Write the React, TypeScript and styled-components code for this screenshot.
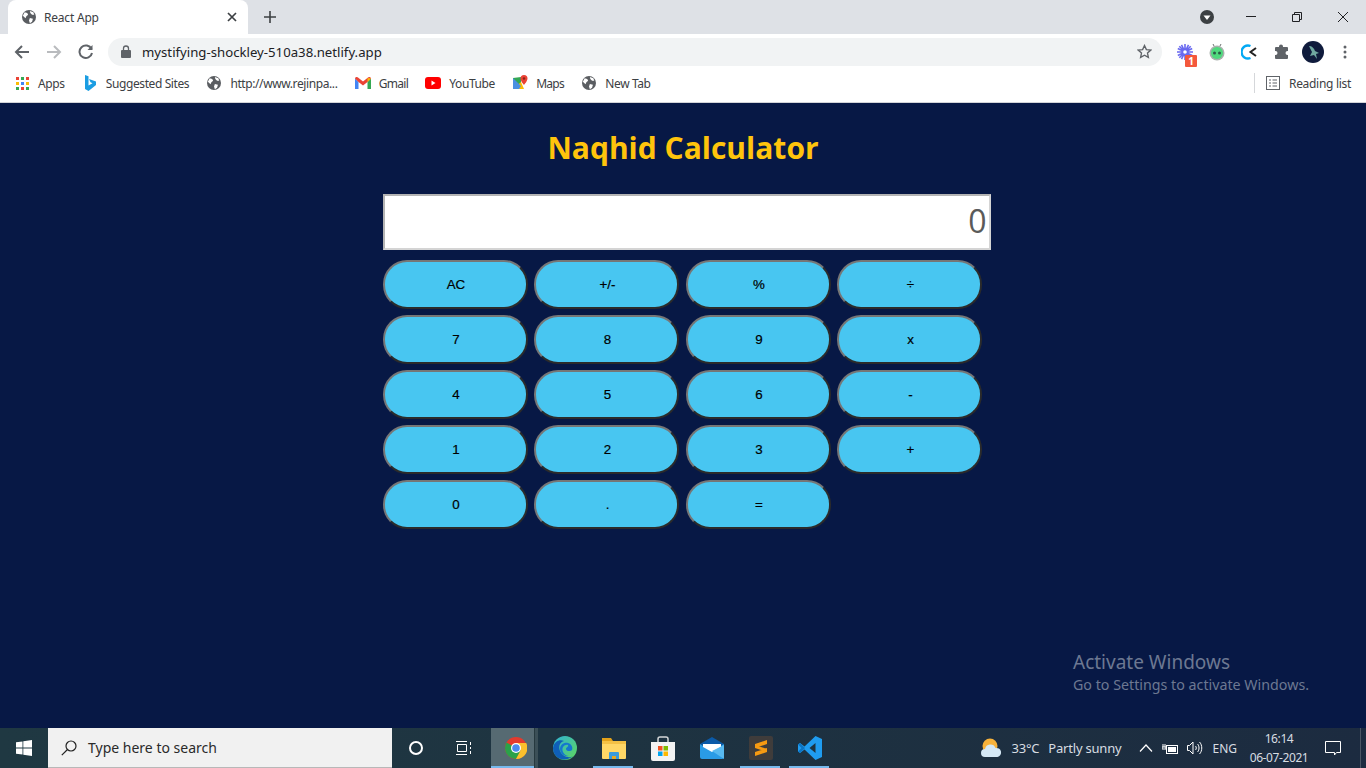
import React from 'react';
import styled, { createGlobalStyle } from 'styled-components';

const Global = createGlobalStyle`
  html, body { margin: 0; padding: 0; height: 100%; overflow: hidden; }
  body { font-family: "Open Sans", "Liberation Sans", sans-serif; }
`;

const Screen = styled.div`
  width: 1366px;
  height: 768px;
  display: flex;
  flex-direction: column;
  position: relative;
  overflow: hidden;
`;

/* browser chrome */
const TabStrip = styled.div`
  height: 34px;
  flex: none;
  background: #dee1e6;
  display: flex;
  align-items: flex-end;
  padding-left: 8px;
`;
const Tab = styled.div`
  width: 240px;
  height: 34px;
  box-sizing: border-box;
  padding: 0 11px 0 14px;
  background: #fff;
  border-radius: 8px 8px 0 0;
  display: flex;
  align-items: center;
  gap: 8px;
`;
const TabTitle = styled.span`
  flex: 1;
  font-size: 12px;
  letter-spacing: -0.2px;
  color: #3c4043;
  font-family: "Noto Sans", sans-serif;
`;
const NewTab = styled.div`
  width: 44px;
  height: 34px;
  display: flex;
  align-items: center;
  justify-content: center;
`;
const WindowControls = styled.div`
  margin-left: auto;
  height: 34px;
  display: flex;
  align-items: center;
`;
const WinBtn = styled.div<{ $w?: number }>`
  width: ${p => p.$w ?? 46}px;
  height: 34px;
  display: flex;
  align-items: center;
  justify-content: center;
`;
const Toolbar = styled.div`
  height: 35px;
  flex: none;
  background: #fff;
  display: flex;
  align-items: center;
  padding-left: 6px;
`;
const NavBtn = styled.div`
  width: 32px;
  height: 32px;
  display: flex;
  align-items: center;
  justify-content: center;
`;
const UrlBar = styled.div`
  width: 1054px;
  height: 28px;
  margin-left: 6px;
  box-sizing: border-box;
  padding: 0 10px 0 13px;
  border-radius: 14px;
  background: #f1f3f4;
  display: flex;
  align-items: center;
  gap: 11px;
`;
const UrlText = styled.span`
  flex: 1;
  font-size: 13.2px;
  color: #202124;
  font-family: "Noto Sans", sans-serif;
`;
const Extensions = styled.div`
  margin-left: 7px;
  display: flex;
  align-items: center;
`;
const Ext = styled.div`
  width: 32px;
  height: 32px;
  position: relative;
  display: flex;
  align-items: center;
  justify-content: center;
`;
const ExtBadge = styled.span`
  position: absolute;
  right: 4px;
  bottom: 1px;
  width: 12px;
  height: 12px;
  background: #f4583c;
  color: #fff;
  font-size: 10px;
  font-weight: 700;
  line-height: 12px;
  text-align: center;
  border-radius: 1px;
`;
const Bookmarks = styled.div`
  height: 34px;
  flex: none;
  box-sizing: border-box;
  background: #fff;
  border-bottom: 1px solid #d2d4d8;
  display: flex;
  align-items: center;
  padding: 0 0 5px 14px;
  gap: 17.2px;
`;
const Bookmark = styled.div<{ $tight?: boolean }>`
  display: flex;
  align-items: center;
  gap: 8px;
  font-size: 12px;
  color: #3c4043;
  font-family: "Noto Sans", sans-serif;
  letter-spacing: ${p => (p.$tight ? '-0.7px' : '-0.4px')};
`;
const IconSlot = styled.span`
  width: 16px;
  height: 16px;
  display: flex;
  align-items: center;
  justify-content: center;
`;
const ReadingList = styled.div`
  margin-left: auto;
  height: 20px;
  padding: 0 15px 0 11px;
  border-left: 1px solid #d5d7da;
  display: flex;
  align-items: center;
  gap: 9px;
  font-size: 12px;
  color: #3c4043;
  font-family: "Noto Sans", sans-serif;
  letter-spacing: -0.3px;
`;

/* calculator page */
const Page = styled.main`
  flex: 1;
  background: #071845;
  display: flex;
  flex-direction: column;
  align-items: center;
`;
const Title = styled.h1`
  margin: 24px 0 0;
  font-family: "Open Sans", sans-serif;
  font-size: 30px;
  line-height: 42px;
  font-weight: 700;
  color: #ffc40c;
`;
const Calculator = styled.div`
  width: 608px;
  margin: 25px 0 0 7px;
  display: flex;
  flex-direction: column;
  gap: 10px;
`;
const Display = styled.input`
  width: 608px;
  height: 56px;
  box-sizing: border-box;
  border-width: 2px;
  border-style: solid;
  border-color: #b4b4b4 #d4d4d4 #d4d4d4 #b4b4b4;
  background: #fff;
  padding: 0 2px 3px 0;
  text-align: right;
  font-family: "Open Sans", sans-serif;
  font-size: 32px;
  color: #5a5a5a;
  outline: none;
`;
const Keys = styled.div`
  display: grid;
  grid-template-columns: repeat(4, 145px);
  grid-auto-rows: 49px;
  column-gap: 6.5px;
  row-gap: 6px;
`;
const Key = styled.button`
  box-sizing: border-box;
  border-width: 2px;
  border-style: solid;
  border-color: #767676 #2b2b2b #2b2b2b #767676;
  border-radius: 24px;
  background: #48c6f1;
  color: #000;
  padding: 0 0 0 2px;
  font-family: "Liberation Sans", sans-serif;
  font-size: 13.33px;
  font-weight: 400;
  -webkit-text-stroke: 0.2px #000;
`;
const Watermark = styled.div`
  position: absolute;
  left: 1073px;
  top: 649px;
  color: #6d7892;
  font-family: "Noto Sans", sans-serif;
  font-size: 14.25px;
  line-height: 20px;
`;
const WatermarkTitle = styled.div`
  font-size: 19px;
  line-height: 26px;
`;

/* windows taskbar */
const Taskbar = styled.footer`
  height: 40px;
  flex: none;
  background: linear-gradient(90deg, #1f3842 0%, #1e3441 40%, #1c2b40 100%);
  display: flex;
  align-items: stretch;
  color: #fff;
`;
const Start = styled.div`
  width: 48px;
  display: flex;
  align-items: center;
  justify-content: center;
`;
const Search = styled.div`
  width: 344px;
  box-sizing: border-box;
  background: #f1f1f1;
  border-bottom: 1px solid #b8b8b8;
  padding-left: 13px;
  display: flex;
  align-items: center;
  gap: 11px;
  color: #2a2a2a;
  font-size: 14px;
  font-family: "Noto Sans", sans-serif;
`;
const TaskBtn = styled.div`
  width: 48px;
  display: flex;
  align-items: center;
  justify-content: center;
`;
const AppGroup = styled.div`
  margin-left: 3px;
  display: flex;
`;
const AppBtn = styled.div<{ $open?: boolean; $active?: boolean }>`
  width: 49px;
  position: relative;
  display: flex;
  align-items: center;
  justify-content: center;
  background: ${p =>
    p.$active
      ? 'linear-gradient(90deg, #566a72 0, #566a72 43px, #26393f 43px, #26393f 44px, #3b4f57 44px, #3b4f57 47px, transparent 47px)'
      : 'transparent'};
  &::after {
    content: '';
    display: ${p => (p.$open ? 'block' : 'none')};
    position: absolute;
    left: ${p => (p.$active ? 0 : 4)}px;
    width: ${p => (p.$active ? 43 : 40)}px;
    bottom: 0;
    height: 2px;
    background: #76b9ed;
  }
`;
const Tray = styled.div`
  margin-left: auto;
  display: flex;
  align-items: center;
  font-family: "Noto Sans", sans-serif;
  color: #d8dde2;
`;
const Weather = styled.div`
  display: flex;
  align-items: center;
  gap: 9px;
  font-size: 13px;
  letter-spacing: -0.2px;
  margin-right: 18px;
`;
const TrayIcons = styled.div`
  display: flex;
  align-items: center;
  gap: 9px;
  font-size: 12px;
`;
const Clock = styled.div`
  width: 60px;
  margin-left: 12px;
  text-align: center;
  font-size: 12px;
  line-height: 19px;
  letter-spacing: -0.4px;
  white-space: nowrap;
`;
const Notify = styled.div`
  width: 52px;
  align-self: stretch;
  box-sizing: border-box;
  padding-right: 3px;
  border-right: 1px solid #4a5665;
  margin-right: 5px;
  display: flex;
  align-items: center;
  justify-content: center;
`;

const Globe = () => (
  <svg width="14" height="14" viewBox="0 0 16 16">
    <circle cx="8" cy="8" r="8" fill="#5a5d61" />
    <path d="M3 2.500l3 1 1 2-2 1.500-1 2.500-3-3zM9 9l3.500 1-1 3.500-2.500 1.500-1-3zM9 1l4 1.500 1 3-2.500 0-2-2z" fill="#fff" />
  </svg>
);

const Arrow = ({ dir, color }: { dir: 'l' | 'r'; color: string }) => (
  <svg width="16" height="16" viewBox="0 0 16 16" fill="none" stroke={color} strokeWidth="2">
    {dir === 'l' ? <path d="M15 8H2M8 2L2 8l6 6" /> : <path d="M1 8h13M8 2l6 6-6 6" />}
  </svg>
);

const AppsGrid = () => (
  <svg width="13" height="13" viewBox="0 0 13 13">
    {[0, 5, 10].map((y, r) =>
      [0, 5, 10].map((x, c) => (
        <rect key={`${r}${c}`} x={x} y={y} width="3" height="3"
          fill={['#ea4335', '#fbbc04', '#34a853', '#4285f4'][(r + c * 2) % 4]} />
      ))
    )}
  </svg>
);

const BingIcon = () => (
  <svg width="12" height="16" viewBox="0 0 12 16">
    <path d="M1 0l3.500 1.200v9.300l4-2.300-2-1L5 4l7 2.500v3.500L4.500 16 1 14z" fill="#1b9de2" />
  </svg>
);

const GmailIcon = () => (
  <svg width="16" height="12" viewBox="0 0 16 12">
    <path d="M0 1.500V12h3.500V5z" fill="#4285f4" />
    <path d="M16 1.500V12h-3.500V5z" fill="#34a853" />
    <path d="M0 1.500C0 0 2 -.5 3 .5L8 4.500 13 .5c1-1 3-.5 3 1L12.500 5 8 8.500 3.500 5z" fill="#ea4335" />
    <path d="M12.500 .9L16 1.500 12.500 5z" fill="#fbbc04" />
  </svg>
);

const YouTubeIcon = () => (
  <svg width="16" height="12" viewBox="0 0 16 12">
    <rect width="16" height="12" rx="3" fill="#f00" />
    <path d="M6.500 3.500v5l4-2.500z" fill="#fff" />
  </svg>
);

const MapsIcon = () => (
  <svg width="16" height="16" viewBox="0 0 16 16">
    <path d="M1 3l8-1v12H1z" fill="#34a853" />
    <path d="M1 14l8-7 3 7z" fill="#fbbc04" />
    <path d="M1 3l8 8-2 3H1z" fill="#4a90e2" />
    <path d="M12 0a3.500 3.500 0 0 1 3.500 3.500C15.500 6 12 10 12 10S8.500 6 8.500 3.500A3.500 3.500 0 0 1 12 0z" fill="#ea4335" />
    <circle cx="12" cy="3.500" r="1.200" fill="#8f2318" />
  </svg>
);

const ChromeLogo = () => (
  <svg width="22" height="22" viewBox="0 0 22 22">
    <circle cx="11" cy="11" r="11" fill="#e33b2e" />
    <path d="M11 11L1.500 5.500A11 11 0 0 0 11 22l5-8z" fill="#2aa24a" />
    <path d="M11 6h10.200A11 11 0 0 1 11 22l4.500-8.500z" fill="#fbc02d" />
    <circle cx="11" cy="11" r="5" fill="#fff" />
    <circle cx="11" cy="11" r="3.800" fill="#4a8bf0" />
  </svg>
);

const EdgeLogo = () => (
  <svg width="24" height="24" viewBox="0 0 24 24">
    <defs>
      <linearGradient id="edgeTop" x1="0" y1="0" x2="1" y2="1">
        <stop offset="0" stopColor="#2fb2d8" />
        <stop offset="1" stopColor="#5fd65a" />
      </linearGradient>
    </defs>
    <circle cx="12" cy="12" r="12" fill="url(#edgeTop)" />
    <path d="M0 12C1 5 7 3 11 5c-4 1-6 5-4 10s9 8 13 5c-5 5-14 4-17 0-2-2-3-5-3-8z" fill="#0f5fb8" />
    <path d="M7 13c0-4 4-7 8-6 4 1 5 5 4 7-2 2-6 1-6-1 0-2 3-2 2-4-3-1-7 2-5 7 1 2 3 4 6 4-5 1-9-3-9-7z" fill="#1476cf" />
  </svg>
);

const FolderLogo = () => (
  <svg width="24" height="22" viewBox="0 0 24 22">
    <path d="M0 1h9l2 3H0z" fill="#e3a21a" />
    <rect y="4" width="24" height="18" rx="1" fill="#ffd766" />
    <rect y="4" width="24" height="3" fill="#f4c145" />
    <path d="M7 22v-6a1 1 0 0 1 1-1h8a1 1 0 0 1 1 1v6h-3v-3h-4v3z" fill="#3a9bdc" />
    <rect x="10" y="19" width="4" height="3" fill="#e9a820" />
  </svg>
);

const StoreLogo = () => (
  <svg width="24" height="25" viewBox="0 0 24 25">
    <path d="M7 7V3a2 2 0 0 1 2-2h6a2 2 0 0 1 2 2v4" fill="none" stroke="#d4d6d8" strokeWidth="1.500" />
    <path d="M0 6h24v17a2 2 0 0 1-2 2H2a2 2 0 0 1-2-2z" fill="#f3f3f3" />
    <rect x="7" y="10" width="4.500" height="4.500" fill="#f25022" />
    <rect x="12.500" y="10" width="4.500" height="4.500" fill="#7fba00" />
    <rect x="7" y="15.500" width="4.500" height="4.500" fill="#00a4ef" />
    <rect x="12.500" y="15.500" width="4.500" height="4.500" fill="#ffb900" />
  </svg>
);

const MailLogo = () => (
  <svg width="24" height="22" viewBox="0 0 24 22">
    <path d="M0 7L12 0l12 7-12 7z" fill="#0b5aa8" />
    <path d="M0 7l12 7 12-7v13a2 2 0 0 1-2 2H2a2 2 0 0 1-2-2z" fill="#2a9be6" />
    <path d="M3 7h18v3l-9 5-9-5z" fill="#fff" />
    <path d="M24 8v14L12 14z" fill="#58b9f0" />
  </svg>
);

const SublimeLogo = () => (
  <svg width="24" height="24" viewBox="0 0 24 24">
    <rect width="24" height="24" rx="2" fill="#3f3c3b" />
    <path d="M18 4v4L6 12V8zM18 12v4L6 20v-4zM6 9l12 4v3L6 12z" fill="#f79a12" />
  </svg>
);

const VsCodeLogo = () => (
  <svg width="24" height="24" viewBox="0 0 24 24">
    <path d="M17.500 0L24 3v18l-6.500 3L6.500 13.500 2 17l-2-1.500v-7L2 7l4.500 3.500z" fill="#1f9cf0" />
    <path d="M17.500 7l-6 5 6 5z" fill="#1e3441" />
    <path d="M0 8.500L2 7l5 5-5 5-2-1.500L3.500 12z" fill="#0c74c4" />
  </svg>
);

const keys = ['AC', '+/-', '%', '÷', '7', '8', '9', 'x', '4', '5', '6', '-', '1', '2', '3', '+', '0', '.', '='];

export default function App() {
  return (
    <Screen>
      <Global />
      <TabStrip>
        <Tab>
          <Globe />
          <TabTitle>React App</TabTitle>
          <svg width="10" height="10" viewBox="0 0 10 10" stroke="#3c4043" strokeWidth="1.700">
            <path d="M1 1l8 8M9 1l-8 8" />
          </svg>
        </Tab>
        <NewTab>
          <svg width="12" height="12" viewBox="0 0 12 12" stroke="#3c4043" strokeWidth="1.600">
            <path d="M6 0v12M0 6h12" />
          </svg>
        </NewTab>
        <WindowControls>
          <WinBtn $w={42}>
            <svg width="14" height="14" viewBox="0 0 14 14">
              <circle cx="7" cy="7" r="7" fill="#3c4043" />
              <path d="M3.500 5.500h7L7 10z" fill="#fff" />
            </svg>
          </WinBtn>
          <WinBtn>
            <svg width="10" height="2"><rect width="10" height="1" fill="#202124" /></svg>
          </WinBtn>
          <WinBtn>
            <svg width="10" height="10" viewBox="0 0 10 10" fill="none" stroke="#202124">
              <path d="M.5 2.500h7v7h-7zM2.500 2.500v-2h7v7h-2" />
            </svg>
          </WinBtn>
          <WinBtn>
            <svg width="10" height="10" viewBox="0 0 10 10" stroke="#202124">
              <path d="M0 0l10 10M10 0L0 10" />
            </svg>
          </WinBtn>
        </WindowControls>
      </TabStrip>

      <Toolbar>
        <NavBtn><Arrow dir="l" color="#5f6368" /></NavBtn>
        <NavBtn><Arrow dir="r" color="#b9bbbe" /></NavBtn>
        <NavBtn>
          <svg width="16" height="16" viewBox="0 0 16 16" fill="none" stroke="#5f6368" strokeWidth="2">
            <path d="M13.500 5A6.300 6.300 0 1 0 14 9" />
            <path d="M14.500 1v5h-5" fill="#5f6368" stroke="none" />
          </svg>
        </NavBtn>
        <UrlBar>
          <svg width="10" height="13" viewBox="0 0 10 13">
            <path d="M2.500 5V3.500a2.500 2.500 0 0 1 5 0V5" fill="none" stroke="#5f6368" strokeWidth="1.300" />
            <rect y="5" width="10" height="8" rx="1" fill="#5f6368" />
          </svg>
          <UrlText>mystifying-shockley-510a38.netlify.app</UrlText>
          <svg width="15" height="15" viewBox="0 0 24 24" fill="none" stroke="#5f6368" strokeWidth="2.200">
            <path d="M12 2.500l3 6.500 7 .8-5.200 4.700 1.400 7L12 17.900l-6.200 3.600 1.400-7L2 9.800 9 9z" />
          </svg>
        </UrlBar>
        <Extensions>
          <Ext>
            <svg width="16" height="16" viewBox="0 0 16 16" stroke="#6a6af0" strokeWidth="1.600">
              <path d="M8 0v16M0 8h16M2.300 2.300l11.400 11.400M13.700 2.300L2.300 13.700M4.500 .8l7 14.400M11.500 .8l-7 14.400M.8 4.500l14.400 7M15.200 4.500l-14.400 7" />
              <circle cx="8" cy="8" r="1.800" fill="#fff" stroke="none" />
            </svg>
            <ExtBadge>1</ExtBadge>
          </Ext>
          <Ext>
            <svg width="16" height="18" viewBox="0 0 16 18">
              <circle cx="8" cy="10" r="7.500" fill="#a8b0ac" />
              <circle cx="8" cy="10" r="6" fill="#4fd97d" />
              <circle cx="5.500" cy="10" r="1.500" fill="#2d5c46" />
              <circle cx="10.500" cy="10" r="1.500" fill="#2d5c46" />
              <path d="M4 1l1 2M12 1l-1 2" stroke="#6b7270" />
            </svg>
          </Ext>
          <Ext>
            <svg width="16" height="16" viewBox="0 0 16 16" fill="none" strokeWidth="2.400">
              <path d="M9.500 2A6.500 6.500 0 1 0 9.500 14" stroke="#03a9f4" />
              <path d="M15 4L9.500 8l5.500 4" stroke="#222" strokeWidth="2" />
            </svg>
          </Ext>
          <Ext>
            <svg width="15" height="15" viewBox="0 0 15 15">
              <path d="M5 2.500a2 2 0 0 1 4 0V3h4a1 1 0 0 1 1 1v3h-.5a2 2 0 0 0 0 4h.5v3a1 1 0 0 1-1 1H2a1 1 0 0 1-1-1v-3h.5a2 2 0 0 0 0-4H1V4a1 1 0 0 1 1-1h3z" fill="#5f6368" />
            </svg>
          </Ext>
          <Ext>
            <svg width="22" height="22" viewBox="0 0 22 22">
              <circle cx="11" cy="11" r="11" fill="#0f1b3c" />
              <path d="M7 5c3 0 5 2 6 5l4 2-3 1 1 5-3-4-4 1 2-4z" fill="#6fa8a0" />
            </svg>
          </Ext>
          <Ext>
            <svg width="4" height="14" viewBox="0 0 4 14" fill="#5f6368">
              <circle cx="2" cy="2" r="1.500" />
              <circle cx="2" cy="7" r="1.500" />
              <circle cx="2" cy="12" r="1.500" />
            </svg>
          </Ext>
        </Extensions>
      </Toolbar>

      <Bookmarks>
        <Bookmark><IconSlot><AppsGrid /></IconSlot>Apps</Bookmark>
        <Bookmark><IconSlot><BingIcon /></IconSlot>Suggested Sites</Bookmark>
        <Bookmark><IconSlot><Globe /></IconSlot>http://www.rejinpa...</Bookmark>
        <Bookmark $tight><IconSlot><GmailIcon /></IconSlot>Gmail</Bookmark>
        <Bookmark><IconSlot><YouTubeIcon /></IconSlot>YouTube</Bookmark>
        <Bookmark $tight><IconSlot><MapsIcon /></IconSlot>Maps</Bookmark>
        <Bookmark><IconSlot><Globe /></IconSlot>New Tab</Bookmark>
        <ReadingList>
          <svg width="14" height="14" viewBox="0 0 14 14" fill="none" stroke="#5f6368">
            <rect x=".5" y=".5" width="13" height="13" />
            <path d="M3 4h2M6.500 4H11M3 7h2M6.500 7H11M3 10h2M6.500 10H11" />
          </svg>
          Reading list
        </ReadingList>
      </Bookmarks>

      <Page>
        <Title>Naqhid Calculator</Title>
        <Calculator>
          <Display readOnly value="0" />
          <Keys>
            {keys.map(k => <Key key={k}>{k}</Key>)}
          </Keys>
        </Calculator>
      </Page>

      <Watermark>
        <WatermarkTitle>Activate Windows</WatermarkTitle>
        Go to Settings to activate Windows.
      </Watermark>

      <Taskbar>
        <Start>
          <svg width="16" height="16" viewBox="0 0 16 16" fill="#fff">
            <path d="M0 2.300l6.500-.9v6.200H0zM7.300 1.300L16 0v7.600H7.300zM0 8.400h6.500v6.200L0 13.700zM7.300 8.400H16V16l-8.700-1.300z" />
          </svg>
        </Start>
        <Search>
          <svg width="16" height="16" viewBox="0 0 16 16" fill="none" stroke="#222" strokeWidth="1.200">
            <circle cx="10" cy="6" r="5" />
            <path d="M6.500 9.500L.8 15.200" />
          </svg>
          Type here to search
        </Search>
        <TaskBtn>
          <svg width="14" height="14"><circle cx="7" cy="7" r="6" fill="none" stroke="#fff" strokeWidth="2" /></svg>
        </TaskBtn>
        <TaskBtn>
          <svg width="16" height="14" viewBox="0 0 16 14" fill="none" stroke="#fff">
            <path d="M0 .5h11M0 13.500h11M1.500 3.500h9v7h-9zM14.500 1v3M14.500 6v2M14.500 10v3" />
          </svg>
        </TaskBtn>
        <AppGroup>
          <AppBtn $open $active><ChromeLogo /></AppBtn>
          <AppBtn><EdgeLogo /></AppBtn>
          <AppBtn $open><FolderLogo /></AppBtn>
          <AppBtn><StoreLogo /></AppBtn>
          <AppBtn><MailLogo /></AppBtn>
          <AppBtn $open><SublimeLogo /></AppBtn>
          <AppBtn $open><VsCodeLogo /></AppBtn>
        </AppGroup>
        <Tray>
          <Weather>
            <svg width="22" height="20" viewBox="0 0 22 20">
              <circle cx="10" cy="8" r="7.500" fill="#f7b23b" />
              <path d="M5 19a4 4 0 0 1 0-8 5.500 5.500 0 0 1 10.500-1 4.500 4.500 0 0 1 2 9z" fill="#d5e8f5" />
            </svg>
            <span>33°C</span>
            <span>Partly sunny</span>
          </Weather>
          <TrayIcons>
            <svg width="14" height="8" viewBox="0 0 14 8" fill="none" stroke="#fff" strokeWidth="1.200"><path d="M1 7.500L7 1l6 6.500" /></svg>
            <svg width="16" height="11" viewBox="0 0 16 11" fill="none" stroke="#fff">
              <rect x="4.500" y="2.500" width="11" height="8" />
              <rect x="6" y="4" width="8" height="5" fill="#fff" stroke="none" />
              <path d="M1 1v3M3 1v3M0 4h4v2H0z" />
            </svg>
            <svg width="16" height="14" viewBox="0 0 16 14" fill="none" stroke="#fff">
              <path d="M.5 4.500h2L6 1v12L2.500 9.500h-2zM8.500 5c1 1 1 3 0 4M10.500 3c2 2 2 6 0 8M12.500 1c3 3 3 9 0 12" />
            </svg>
            <span>ENG</span>
          </TrayIcons>
          <Clock>16:14<br />06-07-2021</Clock>
          <Notify>
            <svg width="16" height="15" viewBox="0 0 16 15" fill="none" stroke="#fff">
              <path d="M.5.500h15v11h-4l-2 2.500v-2.500H.5z" />
            </svg>
          </Notify>
        </Tray>
      </Taskbar>
    </Screen>
  );
}
